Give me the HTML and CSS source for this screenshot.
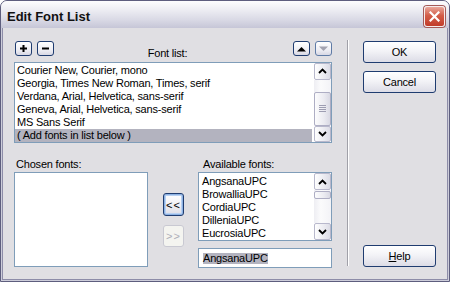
FILE: index.html
```html
<!DOCTYPE html>
<html lang="en">
<head>
    <meta charset="UTF-8">
    <title>Edit Font List</title>
    <link rel="stylesheet" href="styles.css">
</head>
<body>

<div class="window">
    <div class="titlebar">
        <span class="title">Edit Font List</span>
        <span class="close">
            <svg width="11" height="11" viewBox="0 0 11 11"><path d="M1.5 1.5L9.5 9.5M9.5 1.5L1.5 9.5" stroke="#fff" stroke-width="2.2" stroke-linecap="square"/></svg>
        </span>
    </div>

    <div class="client">
        <div class="left">
            <div class="toolbar">
                <span class="tool">
                    <svg width="9" height="9" viewBox="0 0 9 9"><path d="M4.5 1v7M1 4.5h7" stroke="#000" stroke-width="2"/></svg>
                </span>
                <span class="tool">
                    <svg width="9" height="9" viewBox="0 0 9 9"><path d="M1 4.5h7" stroke="#000" stroke-width="2"/></svg>
                </span>
                <span class="toolbar-label">Font list:</span>
                <span class="tool">
                    <svg width="9" height="6" viewBox="0 0 9 6"><path d="M0 5.5L4.5 1L9 5.5z" fill="#000"/></svg>
                </span>
                <span class="tool tool-off">
                    <svg width="9" height="6" viewBox="0 0 9 6"><path d="M0 0.5L4.5 5L9 0.5z" fill="#a3a3b0"/></svg>
                </span>
            </div>

            <div class="listbox font-list">
                <ul class="items">
                    <li>Courier New, Courier, mono</li>
                    <li>Georgia, Times New Roman, Times, serif</li>
                    <li>Verdana, Arial, Helvetica, sans-serif</li>
                    <li>Geneva, Arial, Helvetica, sans-serif</li>
                    <li>MS Sans Serif</li>
                    <li class="selected">( Add fonts in list below )</li>
                </ul>
                <div class="scrollbar">
                    <span class="sb-btn">
                        <svg width="9" height="6" viewBox="0 0 9 6"><path d="M1 5L4.5 1.5L8 5" fill="none" stroke="#000" stroke-width="1.8"/></svg>
                    </span>
                    <div class="sb-track track-font">
                        <span class="sb-thumb thumb-font"><i></i><i></i><i></i><i></i></span>
                    </div>
                    <span class="sb-btn">
                        <svg width="9" height="6" viewBox="0 0 9 6"><path d="M1 1L4.5 4.5L8 1" fill="none" stroke="#000" stroke-width="1.8"/></svg>
                    </span>
                </div>
            </div>

            <div class="pickers">
                <span class="label chosen-label">Chosen fonts:</span>
                <span></span>
                <span class="label available-label">Available fonts:</span>

                <div class="listbox chosen"></div>

                <div class="movers">
                    <span class="btn btn-default mover">&lt;&lt;</span>
                    <span class="btn btn-off mover">&gt;&gt;</span>
                </div>

                <div class="available-col">
                    <div class="listbox available">
                        <ul class="items">
                            <li>AngsanaUPC</li>
                            <li>BrowalliaUPC</li>
                            <li>CordiaUPC</li>
                            <li>DilleniaUPC</li>
                            <li>EucrosiaUPC</li>
                        </ul>
                        <div class="scrollbar">
                            <span class="sb-btn">
                                <svg width="9" height="6" viewBox="0 0 9 6"><path d="M1 5L4.5 1.5L8 5" fill="none" stroke="#000" stroke-width="1.8"/></svg>
                            </span>
                            <div class="sb-track track-avail">
                                <span class="sb-thumb thumb-avail"></span>
                            </div>
                            <span class="sb-btn">
                                <svg width="9" height="6" viewBox="0 0 9 6"><path d="M1 1L4.5 4.5L8 1" fill="none" stroke="#000" stroke-width="1.8"/></svg>
                            </span>
                        </div>
                    </div>
                    <div class="textfield"><span class="sel">AngsanaUPC</span></div>
                </div>
            </div>
        </div>

        <div class="separator"></div>

        <div class="right">
            <span class="btn">OK</span>
            <span class="btn">Cancel</span>
            <span class="btn btn-help"><u>H</u>elp</span>
        </div>
    </div>
</div>

</body>
</html>
```

FILE: styles.css
```css
* {
    margin: 0;
    padding: 0;
    box-sizing: border-box;
    list-style: none;
}

body {
    background: #fff;
    font: 11px "Liberation Sans", Arial, sans-serif;
    letter-spacing: -0.2px;
    color: #000;
}

.window {
    display: flex;
    flex-direction: column;
    width: 450px;
    height: 282px;
    border: 1px solid #5e5e7e;
    border-radius: 7px 7px 0 0;
    background: #cdcdda;
    overflow: hidden;
}

.titlebar {
    display: flex;
    align-items: center;
    justify-content: space-between;
    flex: none;
    height: 27px;
    padding: 4px 4px 0 6px;
    background: linear-gradient(#fdfdfe 0%, #ececf2 35%, #d9d9e5 70%, #c6c6d7 100%);
}

.title {
    font: bold 13px "Liberation Sans", Arial, sans-serif;
    letter-spacing: 0;
    color: #111;
}

.close {
    display: flex;
    align-items: center;
    justify-content: center;
    width: 21px;
    height: 21px;
    border: 1px solid #f6ecec;
    border-radius: 3px;
    background: linear-gradient(#e9a79b, #d35d48 45%, #c13c2a);
    box-shadow: 0 0 0 1px #a45a58;
}

.client {
    display: flex;
    align-items: flex-start;
    flex: 1;
    margin: 0 1px 1px;
    padding: 13px 11px 0 11px;
    border: 1px solid #8d8ca8;
    border-top: 0;
    background: #e0dfe3;
}

.left {
    width: 318px;
}

.toolbar {
    display: flex;
    align-items: flex-start;
    height: 21px;
}

.tool {
    display: flex;
    align-items: center;
    justify-content: center;
    width: 17px;
    height: 15px;
    border: 1px solid #1f3c70;
    border-radius: 3px;
    background: linear-gradient(#ffffff, #eeeef4 60%, #d8d8e4);
}

.tool + .tool {
    margin-left: 5px;
}

.tool:first-child {
    margin-left: 1px;
}

.tool-off {
    border-color: #5f7ba6;
}

.toolbar-label {
    flex: 1;
    margin-top: 6px;
    padding-right: 12px;
    line-height: 13px;
    text-align: center;
}

.listbox {
    display: flex;
    border: 1px solid #7f9db9;
    background: #fff;
}

.items {
    flex: 1;
    padding: 1px 2px 0 0;
}

.items li {
    height: 13px;
    padding-left: 2px;
    line-height: 13px;
    white-space: nowrap;
}

.items li.selected {
    background: #b3b3bf;
}

.font-list {
    height: 81px;
}

.scrollbar {
    display: flex;
    flex-direction: column;
    width: 17px;
}

.sb-btn {
    display: flex;
    align-items: center;
    justify-content: center;
    height: 17px;
    border: 1px solid #b8b8cc;
    border-radius: 2px;
    background: linear-gradient(to right, #fefefe, #ebebf1 60%, #dcdce6);
}

.sb-track {
    flex: 1;
    background: linear-gradient(to right, #eeeef3, #fbfbfc 40%, #f3f3f7);
}

.sb-thumb {
    display: flex;
    flex-direction: column;
    align-items: center;
    justify-content: center;
    gap: 1px;
    border: 1px solid #aeaec4;
    border-radius: 2px;
    background: linear-gradient(to right, #fcfcfd, #ebebf1 60%, #d9d9e4);
}

.sb-thumb i {
    display: block;
    width: 7px;
    height: 1px;
    background: #9d9db2;
}

.track-font {
    padding-top: 12px;
}

.thumb-font {
    height: 34px;
}

.track-avail {
    padding-top: 1px;
}

.thumb-avail {
    height: 8px;
}

.pickers {
    display: grid;
    grid-template-columns: 134px 50px 134px;
    grid-template-rows: 14px auto;
    margin-top: 15px;
}

.label {
    line-height: 13px;
}

.chosen-label {
    padding-left: 2px;
}

.available-label {
    padding-left: 5px;
}

.chosen {
    height: 95px;
}

.movers {
    display: flex;
    flex-direction: column;
    align-items: center;
    padding-top: 21px;
}

.available-col {
    display: flex;
    flex-direction: column;
}

.available {
    height: 69px;
}

.available .items {
    padding: 2px 0 0 1px;
}

.textfield {
    height: 20px;
    margin-top: 7px;
    padding: 4px 0 0 4px;
    border: 1px solid #7f9db9;
    background: #fff;
    line-height: 11px;
}

.textfield .sel {
    display: inline-block;
    background: #b3b3bf;
    line-height: 11px;
}

.btn {
    display: flex;
    align-items: center;
    justify-content: center;
    height: 22px;
    border: 1px solid #1f3c70;
    border-radius: 3px;
    background: linear-gradient(#ffffff, #f3f3f7 45%, #dcdce6);
}

.mover {
    width: 21px;
    height: 23px;
    letter-spacing: 1px;
    padding-left: 1px;
}

.btn-default {
    box-shadow: inset 0 0 0 1px #8db2e3, inset 0 0 0 2px #b9d1f2;
}

.btn-off {
    height: 22px;
    margin-top: 9px;
    border-color: #c9c9d2;
    background: #f4f4f0;
    color: #aeaeb8;
}

.separator {
    width: 2px;
    height: 226px;
    margin: -1px 14px 0 15px;
    border-left: 1px solid #a0a0a8;
    border-right: 1px solid #fff;
}

.right {
    display: flex;
    flex-direction: column;
    gap: 8px;
    width: 73px;
    height: 226px;
}

.btn-help {
    margin-top: auto;
}
```
